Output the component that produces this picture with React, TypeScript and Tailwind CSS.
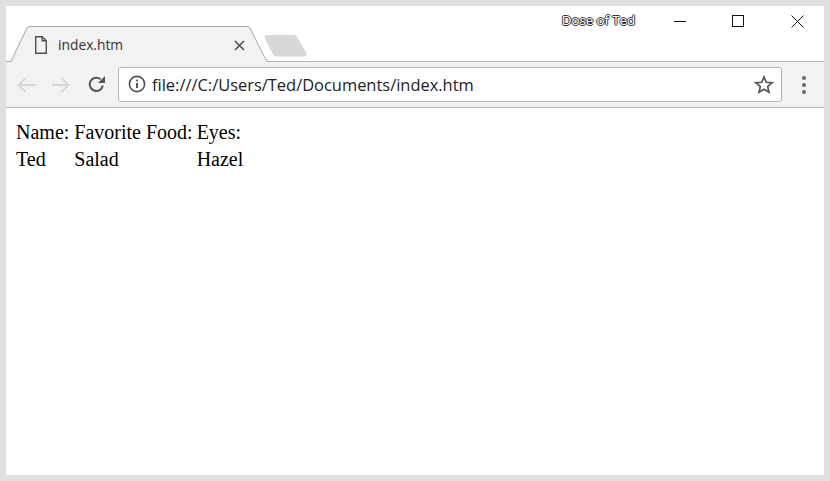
const uiFont = "font-['Open_Sans',sans-serif]"

function Tab() {
  return (
    <div className="relative w-[264px] h-[36px] mt-[20px] shrink-0">
      {/* tab outline, runs over the strip's bottom line */}
      <svg className="absolute inset-0" width="264" height="36" viewBox="0 0 264 36">
        <path d="M0 35.5H4L20 .5H244.5L260.5 35.5H264V36H0Z" fill="#f2f2f2" />
        <path d="M0 35.5H5L20.5 3Q21.5 .5 24 .5H241Q243.5 .5 244.5 3L259.5 33Q260.5 35.5 263 35.5H264" fill="none" stroke="#a8a8a8" />
      </svg>
      <div className="relative h-full flex items-center pl-[29px] pt-[2px]">
        <svg width="12" height="18" viewBox="0 0 12 18" fill="none" stroke="#505050" strokeWidth="1.4">
          <path d="M.7 .7H7.2L11.3 4.8V17.3H.7Z" />
          <path d="M7.2 .7V4.8H11.3" />
        </svg>
        <span className={`ml-[11px] text-[13.8px] text-[#333] ${uiFont}`}>index.htm</span>
        <svg className="ml-auto mr-[25px]" width="11" height="11" viewBox="0 0 11 11" stroke="#505050" strokeWidth="1.6">
          <path d="M1 1L10 10M10 1L1 10" />
        </svg>
      </div>
    </div>
  )
}

function WindowButton({ children }: { children: React.ReactNode }) {
  return <div className="w-[58px] h-[30px] flex items-center justify-center">{children}</div>
}

function Arrow({ flip }: { flip?: boolean }) {
  return (
    <svg className={flip ? "-scale-x-100" : ""} width="18" height="16" viewBox="0 0 18 16" fill="none" stroke="#d6d6d6" strokeWidth="1.8">
      <path d="M18 8H2M8.5 1.2L1.7 8L8.5 14.8" />
    </svg>
  )
}

export default function App() {
  return (
    <div className="w-[830px] h-[481px] border-[6px] border-[#e0e0e0] bg-white flex flex-col overflow-hidden">
      {/* Tab strip */}
      <div className="h-[56px] shrink-0 border-b border-[#b4b4b4] flex items-start">
        <Tab />
        <svg className="-ml-[6px] mt-[29px] shrink-0" width="44" height="22" viewBox="0 0 44 22">
          <path d="M3 0H30Q32 0 33 2L42.5 18Q44 21.5 40 21.5H12Q10 21.5 9 19.5L.7 3Q0 0 3 0Z" fill="#d8d8d8" />
        </svg>
        <div className="ml-auto -mr-px flex items-center">
          <span className={`mr-[16px] text-[13.4px] leading-none tracking-[-0.1px] text-white [text-shadow:1px_0_0_#333,-1px_0_0_#333,0_1px_0_#333,0_-1px_0_#333] ${uiFont}`}>Dose of Ted</span>
          <WindowButton>
            <div className="w-[12px] h-px bg-[#111]" />
          </WindowButton>
          <WindowButton>
            <div className="w-[12px] h-[12px] border border-[#111]" />
          </WindowButton>
          <WindowButton>
            <svg className="ml-[2px]" width="13" height="13" viewBox="0 0 13 13" stroke="#111" strokeWidth="1">
              <path d="M.5 .5L12.5 12.5M12.5 .5L.5 12.5" />
            </svg>
          </WindowButton>
        </div>
      </div>

      {/* Toolbar */}
      <div className="h-[46px] shrink-0 bg-[#f2f2f2] border-b border-[#b9b9b9] flex items-center pl-[11px] pr-[14px]">
        <Arrow />
        <div className="w-[17px]" />
        <Arrow flip />
        <svg className="ml-[17px]" width="19" height="19" viewBox="0 0 19 19" fill="none">
          <path d="M15.8 10.5A6.6 6.6 0 1 1 13.6 4.3" stroke="#555" strokeWidth="2" />
          <path d="M11 8H18V1Z" fill="#555" />
        </svg>
        <div className="ml-[12px] h-[35px] w-[664px] mb-[1px] bg-white border border-[#b3b3b3] rounded-[3px] flex items-center pl-[9px] pr-[7px]">
          <svg width="18" height="18" viewBox="0 0 18 18" fill="none">
            <circle cx="9" cy="9" r="7.6" stroke="#555" strokeWidth="1.6" />
            <path d="M9 8V13" stroke="#555" strokeWidth="2" />
            <circle cx="9" cy="5.5" r="1.1" fill="#555" />
          </svg>
          <span className={`ml-[6px] pt-[2px] text-[16.45px] text-[#222] ${uiFont}`}>file:///C:/Users/Ted/Documents/index.htm</span>
          <svg className="ml-auto" width="20" height="19" viewBox="0 0 20 19" fill="none" stroke="#555" strokeWidth="1.7">
            <path d="M10 2L12.3 7.3L18 7.8L13.7 11.6L15 17.2L10 14.2L5 17.2L6.3 11.6L2 7.8L7.7 7.3Z" />
          </svg>
        </div>
        <div className="ml-auto flex flex-col gap-[3px] pr-[4px]">
          <div className="w-[4px] h-[4px] rounded-full bg-[#666]" />
          <div className="w-[4px] h-[4px] rounded-full bg-[#666]" />
          <div className="w-[4px] h-[4px] rounded-full bg-[#666]" />
        </div>
      </div>

      {/* Page */}
      <div className="flex-1 bg-white pt-[10px] pl-2">
        <table className="border-separate border-spacing-[2px] font-['Liberation_Serif',serif] text-[20px] leading-[23px] text-black">
          <tbody>
            <tr>
              <td className="py-px pl-0 pr-[2px]">Name:</td>
              <td className="p-px">Favorite Food:</td>
              <td className="p-px">Eyes:</td>
            </tr>
            <tr>
              <td className="py-px pl-0 pr-[2px]">Ted</td>
              <td className="p-px">Salad</td>
              <td className="p-px">Hazel</td>
            </tr>
          </tbody>
        </table>
      </div>
    </div>
  )
}
